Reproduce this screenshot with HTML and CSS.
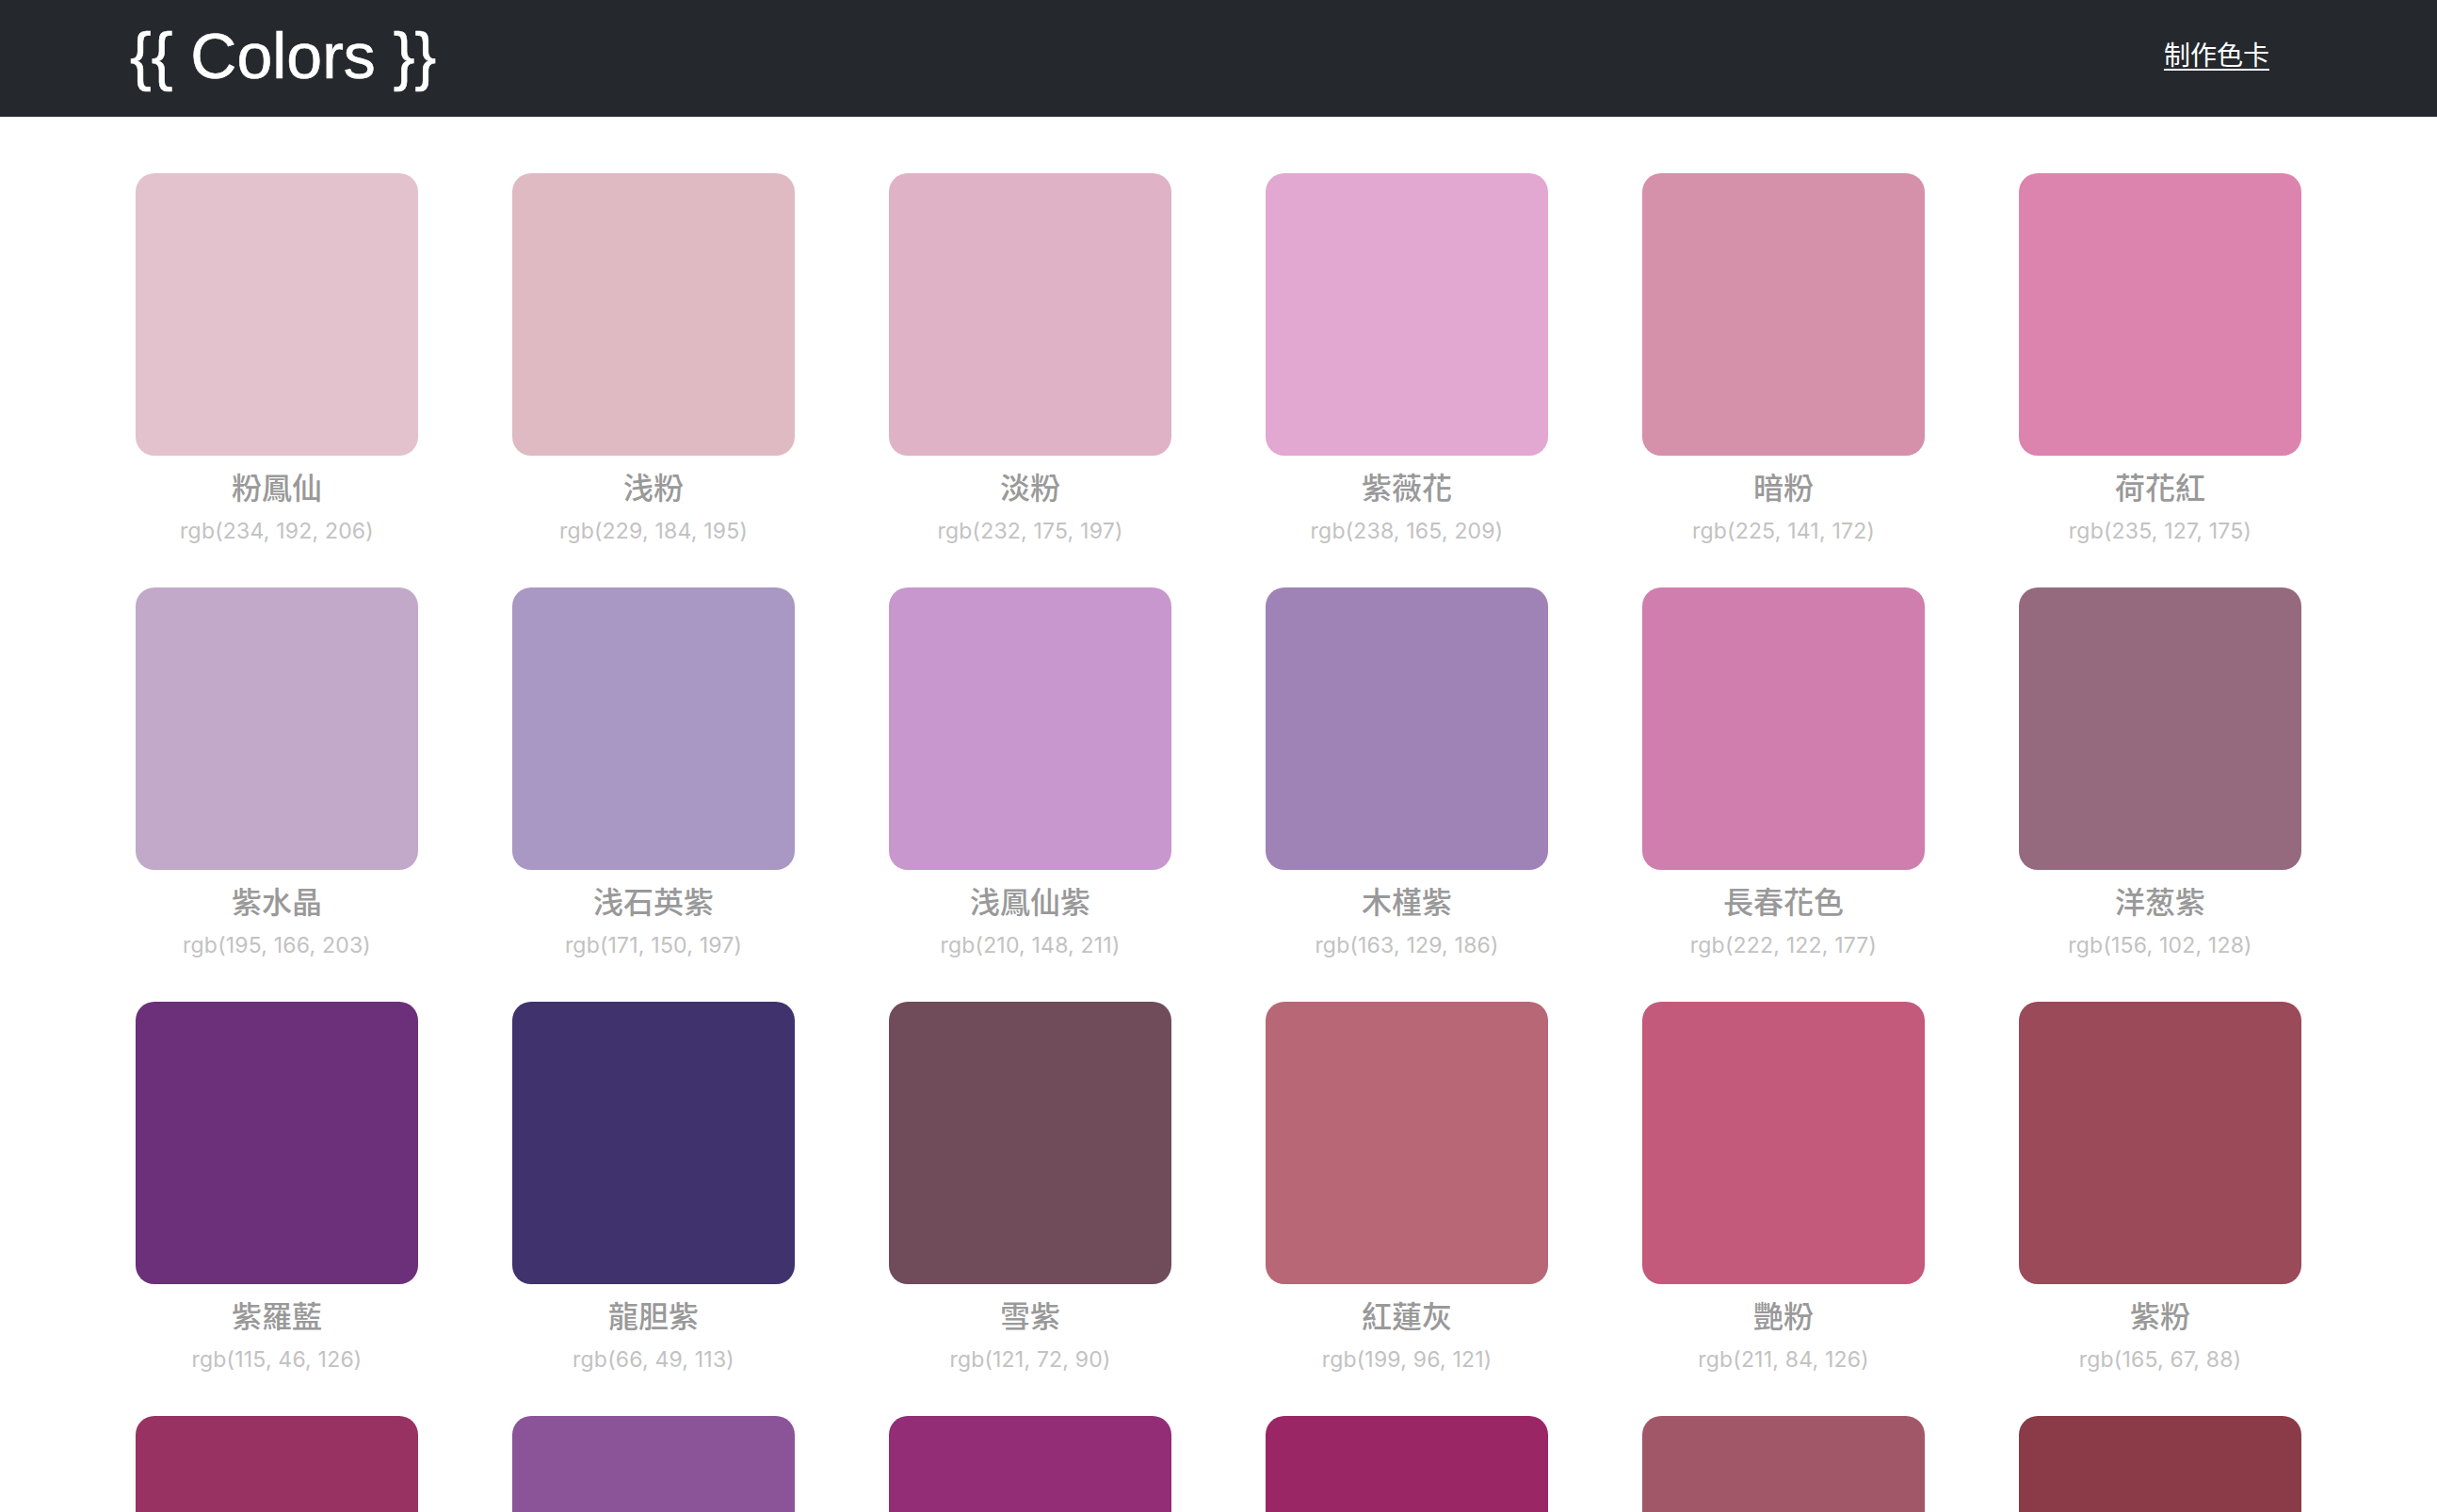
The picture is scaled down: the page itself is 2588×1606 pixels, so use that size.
FILE: index.html
```html
<!DOCTYPE html>
<html lang="zh-Hant">
<head>
<meta charset="utf-8">
<title>{{ Colors }}</title>
<link rel="stylesheet" href="styles.css">
</head>
<body>
<header class="topbar">
  <a class="logo" href="#">{{ Colors }}</a>
  <a class="nav-link" href="#">制作色卡</a>
</header>
<main class="palette">
  <div class="card"><div class="swatch" style="background:#e3c2cd"></div><div class="name">粉鳳仙</div><div class="code">rgb(234, 192, 206)</div></div>
  <div class="card"><div class="swatch" style="background:#dfbac2"></div><div class="name">浅粉</div><div class="code">rgb(229, 184, 195)</div></div>
  <div class="card"><div class="swatch" style="background:#dfb2c6"></div><div class="name">淡粉</div><div class="code">rgb(232, 175, 197)</div></div>
  <div class="card"><div class="swatch" style="background:#e2a8d1"></div><div class="name">紫薇花</div><div class="code">rgb(238, 165, 209)</div></div>
  <div class="card"><div class="swatch" style="background:#d590aa"></div><div class="name">暗粉</div><div class="code">rgb(225, 141, 172)</div></div>
  <div class="card"><div class="swatch" style="background:#dc84ad"></div><div class="name">荷花紅</div><div class="code">rgb(235, 127, 175)</div></div>

  <div class="card"><div class="swatch" style="background:#c2a8c9"></div><div class="name">紫水晶</div><div class="code">rgb(195, 166, 203)</div></div>
  <div class="card"><div class="swatch" style="background:#a998c3"></div><div class="name">浅石英紫</div><div class="code">rgb(171, 150, 197)</div></div>
  <div class="card"><div class="swatch" style="background:#c897ce"></div><div class="name">浅鳳仙紫</div><div class="code">rgb(210, 148, 211)</div></div>
  <div class="card"><div class="swatch" style="background:#9f83b6"></div><div class="name">木槿紫</div><div class="code">rgb(163, 129, 186)</div></div>
  <div class="card"><div class="swatch" style="background:#d07eae"></div><div class="name">長春花色</div><div class="code">rgb(222, 122, 177)</div></div>
  <div class="card"><div class="swatch" style="background:#956a7e"></div><div class="name">洋葱紫</div><div class="code">rgb(156, 102, 128)</div></div>

  <div class="card"><div class="swatch" style="background:#6c2f79"></div><div class="name">紫羅藍</div><div class="code">rgb(115, 46, 126)</div></div>
  <div class="card"><div class="swatch" style="background:#3f326d"></div><div class="name">龍胆紫</div><div class="code">rgb(66, 49, 113)</div></div>
  <div class="card"><div class="swatch" style="background:#704b5a"></div><div class="name">雪紫</div><div class="code">rgb(121, 72, 90)</div></div>
  <div class="card"><div class="swatch" style="background:#b86776"></div><div class="name">紅蓮灰</div><div class="code">rgb(199, 96, 121)</div></div>
  <div class="card"><div class="swatch" style="background:#c35a7b"></div><div class="name">艷粉</div><div class="code">rgb(211, 84, 126)</div></div>
  <div class="card"><div class="swatch" style="background:#9a4a59"></div><div class="name">紫粉</div><div class="code">rgb(165, 67, 88)</div></div>

  <div class="card"><div class="swatch" style="background:#983262"></div><div class="name">苋菜紫</div><div class="code">rgb(163, 45, 100)</div></div>
  <div class="card"><div class="swatch" style="background:#8b5499"></div><div class="name">蝴蝶花紫</div><div class="code">rgb(149, 80, 162)</div></div>
  <div class="card"><div class="swatch" style="background:#932d75"></div><div class="name">紫荊紅</div><div class="code">rgb(158, 41, 123)</div></div>
  <div class="card"><div class="swatch" style="background:#9a2665"></div><div class="name">魏紫</div><div class="code">rgb(165, 35, 106)</div></div>
  <div class="card"><div class="swatch" style="background:#a25769"></div><div class="name">豆蔻紫</div><div class="code">rgb(173, 89, 111)</div></div>
  <div class="card"><div class="swatch" style="background:#8b3a47"></div><div class="name">紫礦紅</div><div class="code">rgb(148, 57, 72)</div></div>
</main>
</body>
</html>
```

FILE: styles.css
```css
html, body {
  margin: 0;
  padding: 0;
  background: #ffffff;
}

body {
  font-family: "Liberation Sans", "Noto Sans CJK TC", sans-serif;
}

.topbar {
  height: 124px;
  background: #25282d;
  display: flex;
  align-items: center;
  justify-content: space-between;
  padding: 0 178px 6px 138px;
  box-sizing: border-box;
}

.logo {
  font-family: "Liberation Sans", Arial, sans-serif;
  font-size: 68px;
  line-height: 1;
  color: #ffffff;
  text-decoration: none;
  -webkit-text-stroke: 0.6px #ffffff;
}

.nav-link {
  margin-bottom: 4px;
  font-family: "Noto Sans CJK TC", "Noto Sans CJK SC", sans-serif;
  font-size: 28px;
  line-height: 1;
  color: #ffffff;
  text-decoration: underline;
  text-underline-offset: 4px;
  text-decoration-thickness: 2px;
}

.palette {
  width: 2400px;
  margin: 0 auto;
  padding-top: 60px;
  display: grid;
  grid-template-columns: repeat(6, 400px);
  row-gap: 45px;
}

.card {
  display: flex;
  flex-direction: column;
  align-items: center;
}

.swatch {
  width: 300px;
  height: 300px;
  border-radius: 20px;
}

.name {
  margin-top: 10px;
  font-family: "Noto Sans CJK TC", "Noto Sans CJK SC", sans-serif;
  font-size: 32px;
  font-weight: 500;
  line-height: 44px;
  color: #999999;
}

.code {
  margin-top: 11px;
  font-family: Inter, "Liberation Sans", sans-serif;
  font-size: 23px;
  letter-spacing: 0.2px;
  line-height: 30px;
  color: #c2c2c2;
}
```
